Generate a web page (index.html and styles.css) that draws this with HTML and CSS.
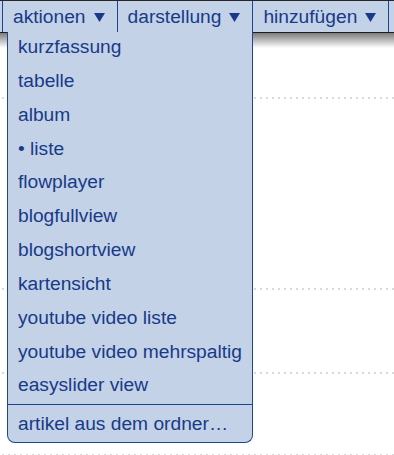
FILE: index.html
```html
<!DOCTYPE html>
<html>
<head>
<meta charset="utf-8">
<link rel="stylesheet" href="styles.css">
</head>
<body>
<div class="page">
  <nav class="bar">
    <div class="tab">aktionen<svg class="arrow" width="11" height="9" viewBox="0 0 11 9"><polygon points="0,0 11,0 5.5,9"/></svg></div>
    <div class="tab">darstellung<svg class="arrow" width="11" height="9" viewBox="0 0 11 9"><polygon points="0,0 11,0 5.5,9"/></svg></div>
    <div class="tab tab-last">hinzufügen<svg class="arrow" width="11" height="9" viewBox="0 0 11 9"><polygon points="0,0 11,0 5.5,9"/></svg></div>
  </nav>
  <div class="shadow"></div>
  <div class="content">
    <div class="row row-1"></div>
    <div class="rule"></div>
    <div class="row row-2"></div>
    <div class="rule"></div>
    <div class="row row-3"></div>
    <div class="rule"></div>
    <div class="row row-4"></div>
    <div class="rule"></div>
  </div>
  <ul class="menu">
    <li class="item">kurzfassung</li>
    <li class="item">tabelle</li>
    <li class="item">album</li>
    <li class="item">• liste</li>
    <li class="item">flowplayer</li>
    <li class="item">blogfullview</li>
    <li class="item">blogshortview</li>
    <li class="item">kartensicht</li>
    <li class="item">youtube video liste</li>
    <li class="item">youtube video mehrspaltig</li>
    <li class="item">easyslider view</li>
    <li class="item item-sep">artikel aus dem ordner…</li>
  </ul>
</div>
</body>
</html>
```

FILE: styles.css
```css
html, body {
  margin: 0;
  padding: 0;
  background: #ffffff;
}

.page {
  position: relative;
  width: 394px;
  height: 455px;
  overflow: hidden;
  font-family: "Liberation Sans", Arial, sans-serif;
  font-size: 19.2px;
  color: #183a88;
}

.bar {
  display: flex;
  height: 31px;
  border-top: 1px solid #262626;
  background: #c3d2e7;
  padding-left: 2px;
}

.tab {
  display: flex;
  align-items: center;
  gap: 8px;
  line-height: 31px;
  padding: 0 12px 0 10px;
  border-left: 1px solid #1d4596;
  white-space: nowrap;
}

.tab-last {
  border-right: 1px solid #1d4596;
}

.arrow {
  fill: #183a88;
  margin-top: 1px;
}

.shadow {
  height: 15px;
  border-top: 1px solid #1e1e1e;
  background: linear-gradient(#7c7c7c, #ffffff);
}

.content {
  display: flex;
  flex-direction: column;
}

.row-1 { height: 49px; }
.row-2 { height: 189px; }
.row-3 { height: 82px; }
.row-4 { height: 80px; }

.rule {
  height: 2px;
  background: repeating-linear-gradient(90deg, #d9d9d9 0 2px, transparent 2px 6px);
  background-position: 2px 0;
}

.menu {
  position: absolute;
  left: 7px;
  top: 32px;
  width: 246px;
  box-sizing: border-box;
  margin: 0;
  padding: 0;
  list-style: none;
  background: #c3d2e7;
  border: 1px solid #1d4596;
  border-top: none;
  border-radius: 0 0 8px 8px;
}

.item {
  line-height: 29px;
  padding: 0 0 4.85px 10px;
  white-space: nowrap;
}

.item-sep {
  border-top: 1px solid #1d4596;
  padding-top: 3.5px;
  padding-bottom: 4.5px;
}
```
